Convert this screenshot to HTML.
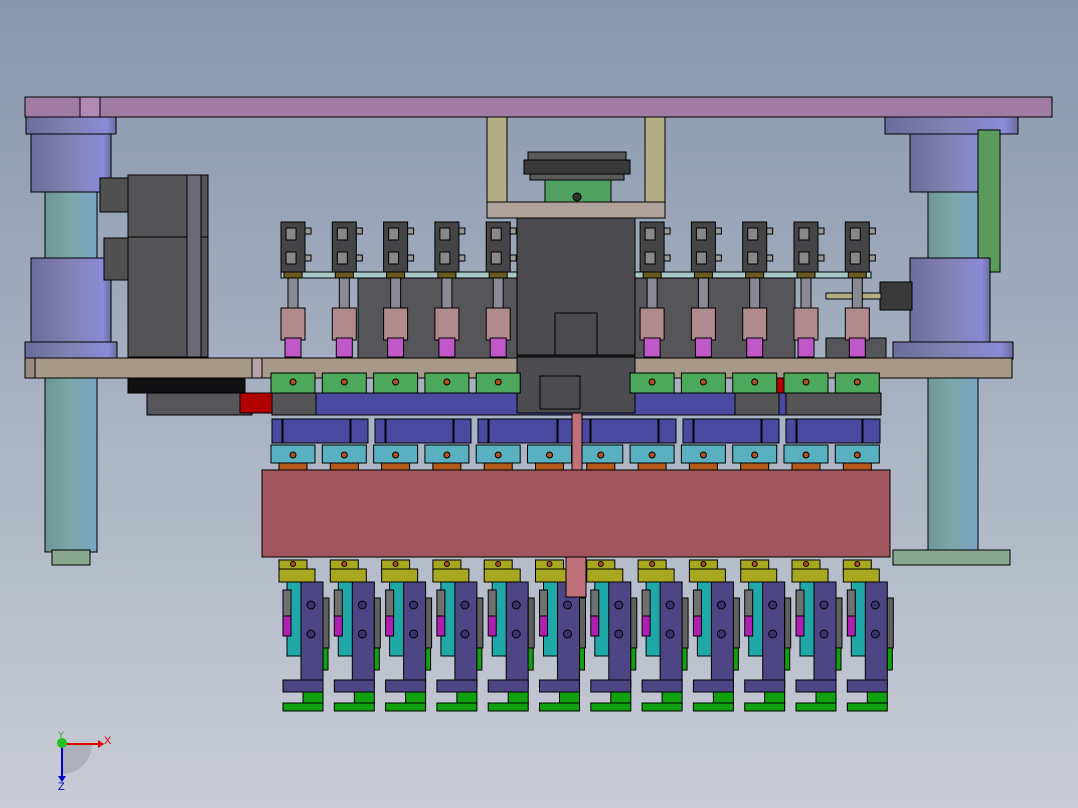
<!DOCTYPE html>
<html><head><meta charset="utf-8"><style>
html,body{margin:0;padding:0;width:1078px;height:808px;overflow:hidden;}
body{background:linear-gradient(#8797ad 0%,#a4afc0 45%,#c9ccd6 100%);}
svg{position:absolute;left:0;top:0}
</style></head><body>
<svg id="s" width="1078" height="808" viewBox="0 0 1078 808" xmlns="http://www.w3.org/2000/svg">
<defs>
<linearGradient id="cyl" x1="0" x2="1"><stop offset="0" stop-color="#6c6c9c"/><stop offset=".5" stop-color="#8282b4"/><stop offset=".9" stop-color="#8a8ad8"/><stop offset="1" stop-color="#6c6c9c"/></linearGradient>
<linearGradient id="col" x1="0" x2="1"><stop offset="0" stop-color="#6e9696"/><stop offset=".5" stop-color="#7aa8a8"/><stop offset="1" stop-color="#7ca4c8"/></linearGradient>
</defs>
<g id="g" stroke="#000" stroke-width="1"></g>
<g font-family="Liberation Sans, sans-serif" font-size="11">
<path d="M62 744 L92 744 A30 30 0 0 1 62 774 Z" fill="#9ca0aa" opacity=".6"/>
<line x1="62" y1="744" x2="98" y2="744" stroke="#e00000" stroke-width="2"/>
<polygon points="98,740 104,744 98,748" fill="#e00000"/>
<line x1="62" y1="744" x2="62" y2="778" stroke="#0000d0" stroke-width="2"/>
<polygon points="58,776 62,782 66,776" fill="#0000d0"/>
<circle cx="62" cy="743" r="5" fill="#20c020"/>
<text x="104" y="744" fill="#e00000">X</text>
<text x="58" y="738" fill="#20a020" font-size="9">Y</text>
<text x="58" y="790" fill="#0000c0">Z</text>
</g>
</svg>
<script>
var g=document.getElementById('g'),h='';
function r(x,y,w,h2,f){h+='<rect x="'+x+'" y="'+y+'" width="'+w+'" height="'+h2+'" fill="'+f+'"/>';}
function c(x,y,rr,f){h+='<circle cx="'+x+'" cy="'+y+'" r="'+rr+'" fill="'+f+'"/>';}
r(45,192,52,360,'url(#col)');r(928,192,50,360,'url(#col)');
r(52,550,38,15,'#8aa890');r(893,550,117,15,'#8aa890');
r(25,97,1027,20,'#a07ca4');r(80,97,20,20,'#b08ab4');
r(26,117,90,17,'url(#cyl)');r(31,134,80,58,'url(#cyl)');
r(885,117,133,17,'url(#cyl)');r(910,134,80,58,'url(#cyl)');
r(978,130,22,142,'#5a9a5a');
r(31,258,80,86,'url(#cyl)');r(910,258,80,86,'url(#cyl)');
r(25,342,92,17,'url(#cyl)');r(893,342,120,17,'url(#cyl)');
r(880,282,32,28,'#3a3a3a');
r(100,178,28,34,'#505050');r(104,238,24,42,'#505050');
r(128,175,80,62,'#555558');r(128,237,80,120,'#555558');r(187,175,14,182,'#6a6a74');
r(487,117,20,88,'#b4ac84');r(645,117,20,88,'#b4ac84');
r(528,152,98,8,'#5a5a5a');r(524,160,106,14,'#3a3a3a');r(530,174,94,6,'#5a5a5a');
r(545,180,66,22,'#50a060');c(577,197,4,'#333');
r(487,202,178,16,'#b0a298');
r(358,278,437,80,'#55555a');
r(281,272,590,6,'#a8c8c8');
r(25,358,987,20,'#a89888');r(25,358,10,20,'#9a8a80');r(252,358,10,20,'#b8a0a8');
r(128,378,117,15,'#101012');r(147,393,105,22,'#55555a');r(240,393,32,20,'#b00000');r(312,393,10,20,'#b00000');r(776,378,10,35,'#b00000');
r(826,338,60,20,'#55555a');r(826,293,55,6,'#b4ac84');
var xs=[];for(var i=0;i<12;i++)xs.push(293+i*51.3);
r(272,393,608,22,'#4a4aa0');
r(272,393,44,22,'#555558');r(735,393,44,22,'#555558');r(786,393,95,22,'#555558');
[[272,96],[375,96],[478,97],[580,96],[683,96],[786,94]].forEach(function(a){r(a[0],419,a[1],24,'#4a4aa0');r(a[0]+10,419,1,24,'#000');r(a[0]+a[1]-18,419,1,24,'#000');});
r(517,218,118,195,'#4c4c50');r(517,355,118,2,'#222');r(555,313,42,42,'#4c4c50');r(540,376,40,33,'#4c4c50');
xs.forEach(function(x,i){
 if(i!=5){
 if(x<510||x>630||i==4){r(x-12,222,24,50,'#454548');r(x-7,228,10,12,'#888');r(x-7,252,10,12,'#888');r(x+12,228,6,6,'#999');r(x+12,255,6,6,'#999');r(x-9,272,18,6,'#6a5a20');
 r(x-5,278,10,30,'#8a8a94');
 r(x-12,308,24,32,'#b08a8c');r(x-8,338,16,19,'#c058c8');}
 }
 if(!(x>517&&x<635)){r(x-22,373,44,20,'#4ca85a');c(x,382,3,'#b05020');}
 r(x-22,445,44,18,'#58b0c0');c(x,455,3,'#b05020');r(x-14,463,28,8,'#b45a18');
 r(x-14,560,28,9,'#a8a820');c(x,564,2.5,'#b05020');r(x-14,569,36,13,'#a8a820');r(x-6,582,24,74,'#20a8a8');r(x-10,590,8,26,'#707070');r(x-10,616,8,20,'#b020b0');
 r(x+8,582,22,106,'#4e4684');c(x+18,605,4,'#3a3270');c(x+18,634,4,'#3a3270');r(x+30,598,6,50,'#606060');r(x+30,648,5,22,'#10a010');
 r(x-10,680,40,12,'#4e4684');r(x+10,692,20,12,'#10a010');r(x-10,703,40,8,'#10a010');
});
r(572,413,10,57,'#c07078');
r(262,470,628,87,'#a0565c');r(566,557,20,40,'#c07078');
g.innerHTML=h;
</script>
</body></html>
